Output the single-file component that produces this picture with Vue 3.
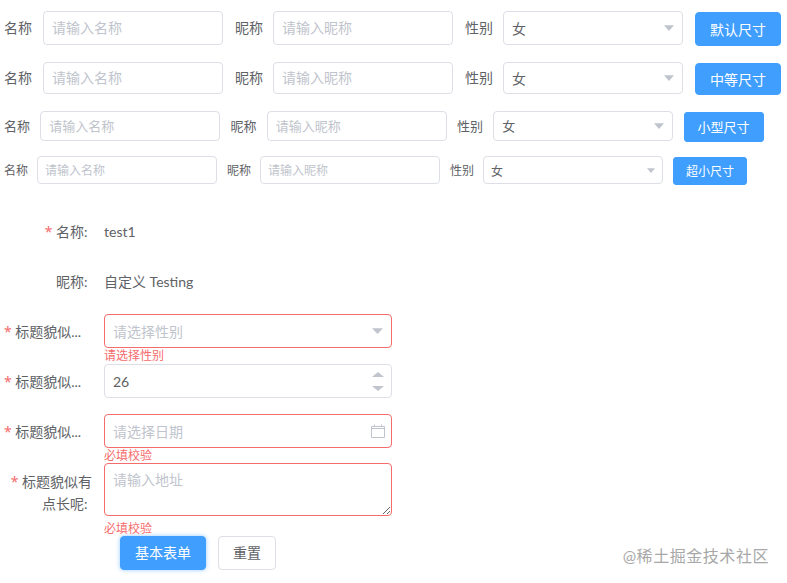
<script setup>
const rows = [
  { size: 'default', button: '默认尺寸' },
  { size: 'medium', button: '中等尺寸' },
  { size: 'small', button: '小型尺寸' },
  { size: 'mini', button: '超小尺寸' }
]
</script>

<template>
  <div class="page">
    <section class="inline-rows">
      <div v-for="row in rows" :key="row.size" class="row" :class="row.size">
        <label class="row-label first">名称</label>
        <input class="box" placeholder="请输入名称" />
        <label class="row-label">昵称</label>
        <input class="box" placeholder="请输入昵称" />
        <label class="row-label">性别</label>
        <div class="box select">
          <span>女</span>
          <svg class="arrow" viewBox="0 0 10 6" preserveAspectRatio="none"><path d="M0 0.3H10L5 6Z" /></svg>
        </div>
        <button class="btn primary">{{ row.button }}</button>
      </div>
    </section>

    <form class="form" @submit.prevent>
      <div class="item">
        <div class="item-label"><i>*</i>名称<span class="colon">:</span></div>
        <div class="control text">test1</div>
      </div>
      <div class="item">
        <div class="item-label">昵称<span class="colon">:</span></div>
        <div class="control text">自定义 Testing</div>
      </div>
      <div class="item">
        <div class="item-label clip"><i>*</i>标题貌似...</div>
        <div class="control">
          <div class="field error">
            <span class="hint">请选择性别</span>
            <svg class="arrow" viewBox="0 0 10 6" preserveAspectRatio="none"><path d="M0 0.3H10L5 6Z" /></svg>
          </div>
          <p class="message">请选择性别</p>
        </div>
      </div>
      <div class="item">
        <div class="item-label clip"><i>*</i>标题貌似...</div>
        <div class="control">
          <div class="field">
            <span>26</span>
            <div class="stepper">
              <svg viewBox="0 0 10 6" preserveAspectRatio="none"><path d="M0 6H10L5 0Z" /></svg>
              <svg viewBox="0 0 10 6" preserveAspectRatio="none"><path d="M0 0H10L5 6Z" /></svg>
            </div>
          </div>
        </div>
      </div>
      <div class="item date">
        <div class="item-label clip"><i>*</i>标题貌似...</div>
        <div class="control">
          <div class="field error">
            <span class="hint">请选择日期</span>
            <svg class="calendar" viewBox="0 0 14 14">
              <path d="M0.5 2.5H13.5V13.5H0.5ZM0.5 4.5H13.5M3.5 0.5V2.5M10.5 0.5V2.5" />
            </svg>
          </div>
          <p class="message">必填校验</p>
        </div>
      </div>
      <div class="item area">
        <div class="item-label wrap">
          <div><i>*</i>标题貌似有</div>
          <div>点长呢<span class="colon">:</span></div>
        </div>
        <div class="control">
          <textarea class="textarea" placeholder="请输入地址"></textarea>
          <p class="message">必填校验</p>
        </div>
      </div>
      <div class="actions">
        <button class="btn primary glow" type="button">基本表单</button>
        <button class="btn plain" type="button">重置</button>
      </div>
    </form>

    <div class="watermark">@稀土掘金技术社区</div>
  </div>
</template>

<style scoped>
.page {
  position: relative;
  height: 583px;
  overflow: hidden;
  background: #fff;
  color: #606266;
  font-family: "Lato", "Noto Sans CJK SC", sans-serif;
  font-size: 14px;
}
.inline-rows {
  padding: 11px 0 0 4px;
}
.row {
  display: flex;
  align-items: flex-start;
  column-gap: 12px;
  --h: 34px;
  --label: 28px;
  --first: 27px;
  font-size: 14px;
}
.row .btn {
  margin-top: 1px;
  padding-bottom: 1px;
}
.row.medium {
  --h: 32px;
  margin-top: 16px;
}
.row.small {
  --h: 30px;
  --label: 26px;
  --first: 26px;
  column-gap: 10.25px;
  margin-top: 16px;
  font-size: 13px;
}
.row.mini {
  --h: 28px;
  --label: 23px;
  --first: 23px;
  column-gap: 10px;
  margin-top: 14px;
  font-size: 12px;
}
.row-label {
  width: var(--label);
  margin-right: -2px;
  height: var(--h);
  line-height: var(--h);
  white-space: nowrap;
}
.row-label.first {
  width: var(--first);
  margin-right: 0;
}
.row.small .row-label,
.row.mini .row-label {
  margin-right: 0;
}
.row.mini .row-label {
  line-height: 30px;
}
.box {
  box-sizing: border-box;
  flex: none;
  width: 180px;
  height: var(--h);
  padding: 0 8px 1px;
  border: 1px solid #dcdfe6;
  border-radius: 4px;
  background: #fff;
  color: #606266;
  font: inherit;
  outline: none;
}
.row.mini .box {
  padding: 0 7px;
}
.box::placeholder,
.textarea::placeholder {
  color: #c0c4cc;
  opacity: 1;
}
.select {
  display: flex;
  align-items: center;
  justify-content: space-between;
  padding-right: 8px;
}
.arrow {
  width: 10px;
  height: 6px;
  fill: #c0c4cc;
  flex: none;
}
.row.mini .arrow {
  width: 8px;
  height: 5px;
}
.btn {
  flex: none;
  box-sizing: border-box;
  height: var(--h, 34px);
  padding: 0 0 2px;
  border: 1px solid #dcdfe6;
  border-radius: 4px;
  font: inherit;
  cursor: pointer;
}
.primary {
  border-color: #409eff;
  background: #409eff;
  color: #fff;
  width: 86px;
}
.row.small .primary {
  width: 80px;
  border-radius: 3px;
}
.row.mini .primary {
  width: 74px;
  border-radius: 3px;
}
.form {
  margin-top: 29px;
}
.item {
  display: flex;
  align-items: flex-start;
  margin-bottom: 16px;
}
.item.date {
  margin-bottom: 15px;
}
.item.area {
  margin-bottom: 14px;
}
.item-label {
  box-sizing: border-box;
  flex: none;
  width: 88px;
  height: 34px;
  margin: 0 12px 0 4px;
  line-height: 36px;
  text-align: right;
  white-space: nowrap;
}
.item-label i {
  margin-right: 3.5px;
  color: #f56c6c;
  font-family: "Noto Sans", sans-serif;
  font-style: normal;
}
.colon {
  display: inline-block;
  width: 8px;
  text-align: left;
}
.clip {
  text-align: left;
}
.wrap {
  height: auto;
  padding-top: 8px;
  line-height: 22px;
}
.control {
  position: relative;
  width: 288px;
}
.text {
  line-height: 36px;
  height: 34px;
}
.field {
  box-sizing: border-box;
  display: flex;
  align-items: center;
  justify-content: space-between;
  height: 34px;
  padding: 0 8px;
  border: 1px solid #dcdfe6;
  border-radius: 4px;
}
.field.error,
.textarea {
  border-color: #f56c6c;
}
.hint {
  color: #c0c4cc;
}
.field .arrow {
  width: 11px;
  height: 6px;
}
.stepper {
  display: flex;
  flex-direction: column;
  gap: 9px;
  margin-right: -1px;
}
.stepper svg {
  display: block;
  width: 12px;
  height: 5px;
  fill: #c0c4cc;
}
.calendar {
  width: 14px;
  height: 14px;
  margin-right: -2px;
  fill: none;
  stroke: #c0c4cc;
  stroke-width: 1;
}
.message {
  position: absolute;
  top: 100%;
  left: 0;
  margin: 1px 0 0;
  color: #f56c6c;
  font-size: 12px;
  line-height: 14px;
}
.item.area .control {
  padding-bottom: 6px;
}
.item.area .message {
  margin-top: 0;
}
.textarea {
  display: block;
  box-sizing: border-box;
  width: 288px;
  height: 53px;
  padding: 5px 8px;
  border-width: 1px;
  border-style: solid;
  border-radius: 4px;
  color: #606266;
  font: inherit;
  line-height: 22px;
  outline: none;
  resize: vertical;
}
.actions {
  display: flex;
  gap: 12px;
  padding-left: 120px;
}
.glow {
  box-shadow: 0 0 4px rgba(64, 158, 255, 0.55);
}
.plain {
  width: 58px;
  background: #fff;
  color: #606266;
}
.watermark {
  position: absolute;
  right: 18px;
  top: 545px;
  color: #a8a8a8;
  font-size: 16px;
  line-height: 22px;
  letter-spacing: 0.55px;
  white-space: nowrap;
}
</style>
